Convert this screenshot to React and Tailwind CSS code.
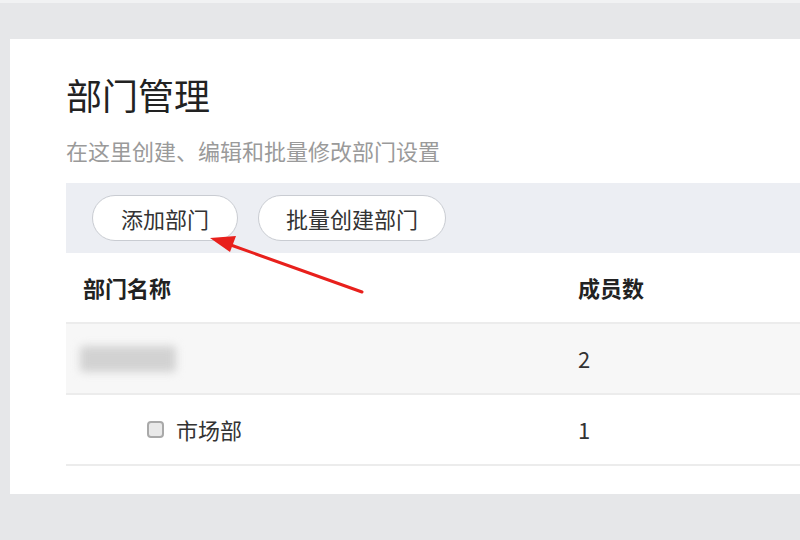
import React from 'react';

const FONT = { fontFamily: '"Microsoft YaHei", "Noto Sans CJK SC", "Open Sans", sans-serif' };

export default function App() {
  return (
    <div className="relative w-[800px] h-[540px] overflow-hidden bg-[#e6e7e9]" style={FONT}>
      <div className="h-[3px] bg-[#f1f2f3]" />
      <div className="ml-[10px] mt-[36px] w-[800px] h-[455px] bg-white pl-[56px] pt-[33px]">
        <h1 className="text-[36px] leading-[44px] text-[#222] font-normal">部门管理</h1>
        <p className="mt-[19px] text-[22px] leading-[30px] text-[#9a9a9a]">在这里创建、编辑和批量修改部门设置</p>

        {/* toolbar */}
        <div className="mt-[18px] h-[70px] bg-[#eceef3] flex items-center gap-[20px] pl-[26px]">
          <button className="h-[46px] px-[28px] rounded-full border border-[#c9ccd2] bg-white text-[22px] leading-none text-[#333]">添加部门</button>
          <button className="h-[46px] px-[27px] rounded-full border border-[#c9ccd2] bg-white text-[22px] leading-none text-[#333]">批量创建部门</button>
        </div>

        {/* table */}
        <div className="text-[22px] text-[#333]">
          <div className="h-[71px] flex items-center border-b-2 border-[#ececec]">
            <div className="w-[512px] pl-[17px] font-bold text-[#222]">部门名称</div>
            <div className="font-bold text-[#222]">成员数</div>
          </div>
          <div className="h-[71px] flex items-center bg-[#f7f7f7] border-b-2 border-[#ececec]">
            <div className="w-[512px] pl-[14px]">
              <div className="w-[96px] h-[26px] rounded bg-[#d2d2d2] blur-[4px]" />
            </div>
            <div>2</div>
          </div>
          <div className="h-[71px] flex items-center border-b-2 border-[#ececec]">
            <div className="w-[512px] pl-[81px] flex items-center gap-[12px]">
              <span className="w-[17px] h-[17px] rounded-[4px] border-2 border-[#a9a9a9] bg-[#e9e9e9]" />
              <span>市场部</span>
            </div>
            <div>1</div>
          </div>
        </div>
      </div>

      {/* annotation arrow */}
      <svg className="absolute left-0 top-0" width="800" height="540" viewBox="0 0 800 540">
        <line x1="362" y1="292" x2="228" y2="244" stroke="#e8201c" strokeWidth="3" strokeLinecap="round" />
        <polygon points="210,238 236,236 230,252" fill="#e8201c" />
      </svg>
    </div>
  );
}
